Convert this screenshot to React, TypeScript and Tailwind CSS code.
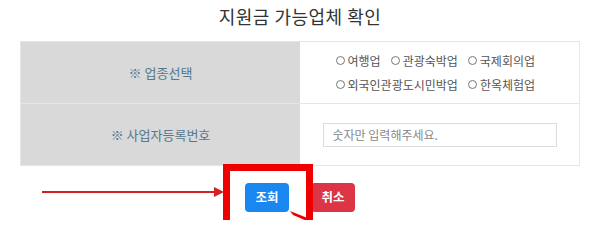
import React from "react";

const options = [
  ["여행업", "관광숙박업", "국제회의업"],
  ["외국인관광도시민박업", "한옥체험업"],
];

export default function App() {
  return (
    <div
      className="relative w-[600px] h-[220px] overflow-hidden bg-white"
      style={{ fontFamily: '"Noto Sans CJK KR", "Noto Sans", sans-serif' }}
    >
      {/* title */}
      <div className="h-[41px] flex items-start justify-center pt-[2px]">
        <h1 className="text-[18px] leading-[28px] text-[#333] tracking-[0.5px]">지원금 가능업체 확인</h1>
      </div>

      {/* table */}
      <div className="mx-[20px] w-[560px] border border-[#e6e6e6]">
        <div className="flex h-[62px] border-b border-[#e6e6e6]">
          <div className="w-[279px] bg-[#d9d9d9] flex items-center justify-center text-[13px] text-[#55788c]">
            ※ 업종선택
          </div>
          <div className="flex-1 flex flex-col justify-center items-center gap-[4px] text-[12px] text-[#555]">
            {options.map((row, i) => (
              <div key={i} className="flex gap-[10px] w-[208px] leading-[20px]">
                {row.map((o) => (
                  <span key={o} className="flex items-center gap-[3px]">
                    <span className="inline-block w-[9px] h-[9px] rounded-full border border-[#777]" />
                    {o}
                  </span>
                ))}
              </div>
            ))}
          </div>
        </div>
        <div className="flex h-[61px]">
          <div className="w-[279px] bg-[#d9d9d9] flex items-center justify-center text-[13px] text-[#55788c]">
            ※ 사업자등록번호
          </div>
          <div className="flex-1 flex items-center justify-center">
            <input
              placeholder="숫자만 입력해주세요."
              className="w-[234px] h-[24px] border border-[#dcdcdc] px-[9px] text-[12px] placeholder:text-[#888] outline-none"
            />
          </div>
        </div>
      </div>

      {/* buttons */}
      <div className="mt-[17px] flex justify-center gap-[22px]">
        <button className="w-[44px] h-[29px] rounded-[4px] bg-[#1a86f0] text-white text-[12.5px] font-semibold">조회</button>
        <button className="w-[44px] h-[29px] rounded-[4px] bg-[#dc3545] text-white text-[12.5px] font-semibold">취소</button>
      </div>

      {/* annotation: arrow */}
      <div className="absolute left-[42px] top-[191px] w-[176px] h-[2px] bg-[#d42020]" />
      <svg className="absolute left-[214px] top-[187px]" width="10" height="10" viewBox="0 0 10 10">
        <polygon points="0,0 10,5 0,10" fill="#d42020" />
      </svg>

      {/* annotation: highlight box */}
      <div className="absolute left-[223px] top-[164px] w-[90px] h-[70px] border-[7px] border-[#ee0000]" />
      <svg className="absolute left-[290px] top-[211px]" width="20" height="10" viewBox="0 0 20 10">
        <polygon points="0,0 20,8 17,10 3,4" fill="#ee0000" />
      </svg>
    </div>
  );
}
